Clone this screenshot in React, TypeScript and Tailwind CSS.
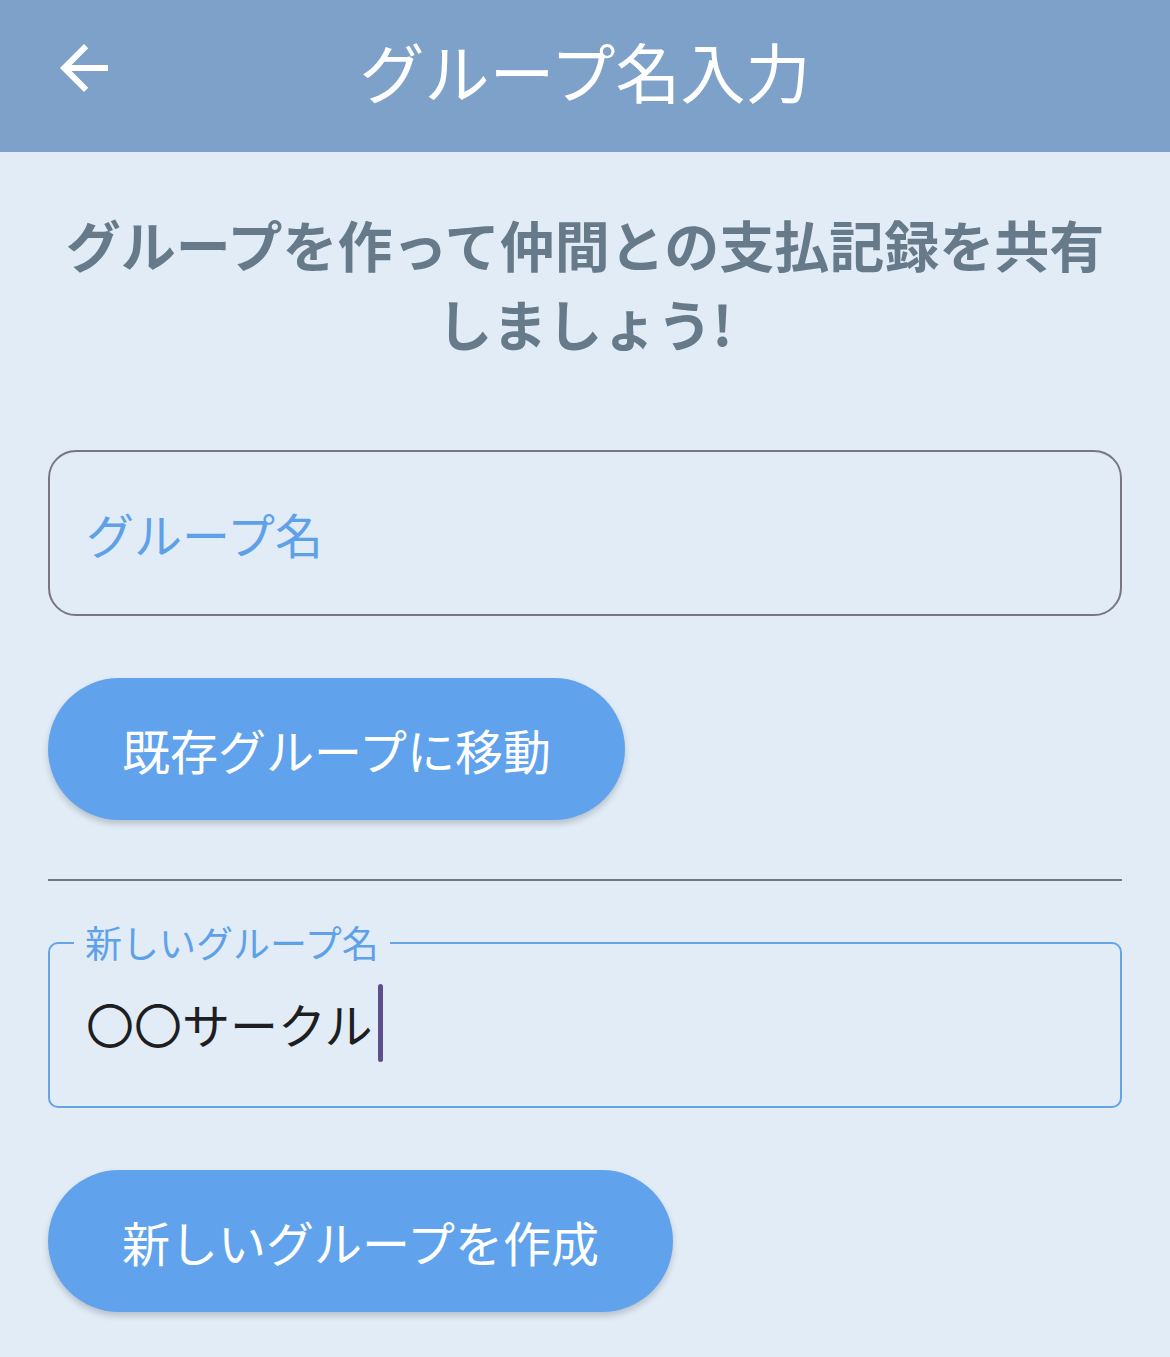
import React from "react";

const font = { fontFamily: '"Noto Sans CJK JP", "Noto Sans", sans-serif' };

const BackArrow = () => (
  <svg viewBox="0 0 24 24" className="w-[72px] h-[72px]" fill="white">
    <path d="M20 11H7.83l5.59-5.59L12 4l-8 8 8 8 1.41-1.41L7.83 13H20v-2z" />
  </svg>
);

export default function App() {
  return (
    <div style={font} className="w-[1170px] min-h-[1357px] bg-[#E1ECF7]">
      {/* Header */}
      <header className="relative h-[152px] bg-[#7EA1CA] flex items-center justify-center pb-[12px]">
        <button className="absolute left-[48px] top-[32px]">
          <BackArrow />
        </button>
        <h1 className="text-white text-[65px] leading-none">グループ名入力</h1>
      </header>

      <main className="px-[48px]">
        <p className="mt-[52px] text-center font-bold text-[55px] leading-[79px] text-[#677A89]">
          グループを作って仲間との支払記録を共有
          <br />
          しましょう!
        </p>

        {/* existing group name */}
        <div className="mt-[88px] h-[166px] border-2 border-[#78777F] rounded-[28px] flex items-center px-[36px]">
          <span className="text-[48px] leading-none text-[#5EA1E9]">グループ名</span>
        </div>

        <button className="mt-[62px] h-[142px] px-[74px] rounded-full bg-[#60A3EC] text-white text-[48px] leading-none shadow-[0_4px_6px_rgba(0,0,0,0.18)]">
          既存グループに移動
        </button>

        <div className="mt-[59px] h-[2px] bg-[#6B7988]" />

        {/* new group name */}
        <fieldset className="mt-[43px] border-2 border-[#64A3E6] rounded-[10px] px-[24px] pb-[59px]">
          <legend className="px-[11px] text-[37px] leading-none text-[#5EA1E9]">新しいグループ名</legend>
          <div className="pt-[38px] flex items-center h-[86px] pl-[12px]">
            <span className="text-[48px] leading-[48px] text-[#1E1E22]">〇〇サークル</span>
            <span className="ml-[5px] w-[5px] h-[78px] rounded-full bg-[#5F4E8C]" />
          </div>
        </fieldset>

        <button className="mt-[62px] h-[142px] px-[74px] rounded-full bg-[#60A3EC] text-white text-[48px] leading-none shadow-[0_4px_6px_rgba(0,0,0,0.18)]">
          新しいグループを作成
        </button>
      </main>
    </div>
  );
}
